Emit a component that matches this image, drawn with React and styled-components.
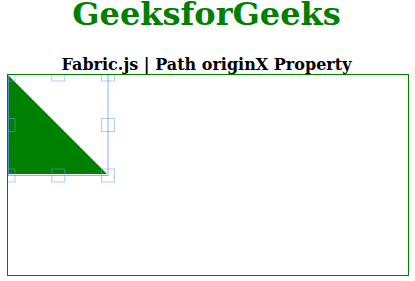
import React from "react";
import styled, { createGlobalStyle } from "styled-components";

const GlobalStyle = createGlobalStyle`
  html, body {
    margin: 0;
    padding: 0;
    background: #ffffff;
  }
  body {
    font-family: "DejaVu Serif", serif;
    overflow: hidden;
  }
`;

const Page = styled.div`
  padding: 0 9px 0 7px;
`;

const Header = styled.header`
  text-align: center;
`;

const Title = styled.h1`
  margin: 0 0 27px;
  font-family: "DejaVu Serif", serif;
  font-size: 32px;
  font-weight: bold;
  line-height: 28px;
  color: #008000;
`;

const Subtitle = styled.div`
  font-family: "DejaVu Serif", serif;
  font-size: 16px;
  font-weight: bold;
  line-height: 19px;
  color: #000000;
`;

const CanvasBox = styled.div`
  width: 400px;
  height: 200px;
  border: 1px solid #008000;
  overflow: hidden;
`;

const Drawing = styled.svg`
  display: block;
  width: 400px;
  height: 200px;
`;

const border = "rgba(102,153,255,0.75)";
const corner = "rgba(102,153,255,0.5)";

function Control({ cx, cy }) {
  return (
    <rect
      x={cx - 6.5}
      y={cy - 6.5}
      width={13}
      height={13}
      fill="none"
      stroke={corner}
      strokeWidth={1}
    />
  );
}

export default function App() {
  const left = 0.5;
  const top = -0.5;
  const right = 100;
  const bottom = 100.5;
  const midX = (left + right) / 2;
  const midY = (top + bottom) / 2;
  return (
    <Page>
      <GlobalStyle />
      <Header>
        <Title>GeeksforGeeks</Title>
        <Subtitle>Fabric.js | Path originX Property</Subtitle>
      </Header>
      <CanvasBox>
        <Drawing viewBox="0 0 400 200">
          <path d="M 0 0 L 99 99 L 0 99 Z" fill="#008000" />
          <rect
            x={left}
            y={top}
            width={right - left}
            height={bottom - top}
            fill="none"
            stroke={border}
            strokeWidth={1}
          />
          <Control cx={left} cy={top} />
          <Control cx={midX} cy={top} />
          <Control cx={right} cy={top} />
          <Control cx={left} cy={midY} />
          <Control cx={right} cy={midY} />
          <Control cx={left} cy={bottom} />
          <Control cx={midX} cy={bottom} />
          <Control cx={right} cy={bottom} />
        </Drawing>
      </CanvasBox>
    </Page>
  );
}
